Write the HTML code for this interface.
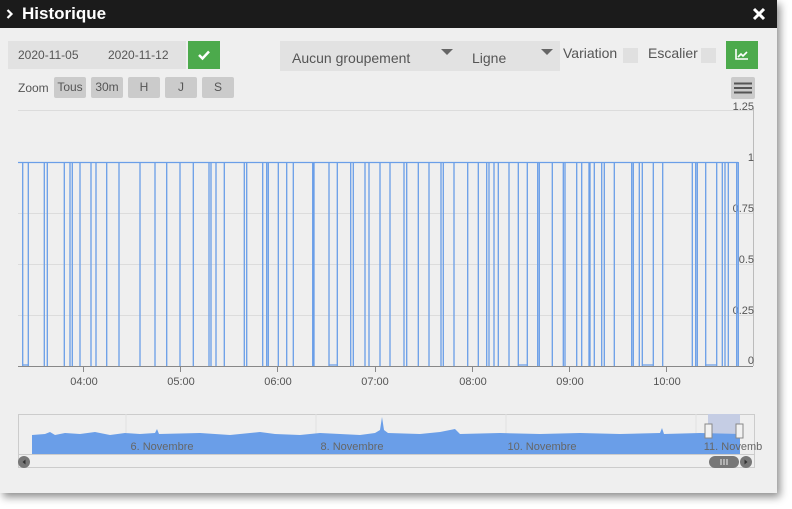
<!DOCTYPE html>
<html><head><meta charset="utf-8"><style>
*{margin:0;padding:0;box-sizing:border-box}
body{width:792px;height:509px;background:#fff;font-family:"Liberation Sans",sans-serif;position:relative;overflow:hidden}
.win{position:absolute;left:0;top:0;width:777px;height:493px;background:#efefef;box-shadow:3px 4px 8px rgba(0,0,0,.45)}
.title{position:absolute;left:0;top:0;width:777px;height:28px;background:#1b1b1b;color:#fff;font-size:17px;font-weight:bold}
.abs{position:absolute}
.btn{position:absolute;background:#cbcbcb;color:#555;font-size:12px;text-align:center;line-height:21px;height:21px;border-radius:2px}
</style></head><body>
<div class="win">
<div class="title"><svg class="abs" style="left:6px;top:9px" width="8" height="10"><path d="M1.5 1L5.5 5L1.5 9" stroke="#fff" stroke-width="2.2" fill="none"/></svg><span class="abs" style="left:22px;top:4px">Historique</span>
<svg class="abs" style="left:752px;top:7px" width="14" height="14"><path d="M2 2L12 12M12 2L2 12" stroke="#fff" stroke-width="3"/></svg></div>
<div class="abs" style="left:8px;top:41px;width:178px;height:28px;background:#e2e2e2"></div>
<span class="abs" style="left:18px;top:48px;font-size:12px;color:#555">2020-11-05</span>
<span class="abs" style="left:108px;top:48px;font-size:12px;color:#555">2020-11-12</span>
<div class="abs" style="left:188px;top:41px;width:32px;height:28px;background:#4caa4c"></div>
<svg class="abs" style="left:197px;top:49px" width="14" height="12"><path d="M2 6L5.5 9.5L12 2.5" stroke="#fff" stroke-width="2.5" fill="none"/></svg>
<div class="abs" style="left:280px;top:41px;width:280px;height:30px;background:#e2e2e2"></div>
<span class="abs" style="left:292px;top:50px;font-size:14px;color:#555">Aucun groupement</span>
<svg class="abs" style="left:441px;top:49px" width="12" height="6"><path d="M0 0H12L6 6Z" fill="#666"/></svg>
<span class="abs" style="left:472px;top:50px;font-size:14px;color:#555">Ligne</span>
<svg class="abs" style="left:541px;top:49px" width="12" height="6"><path d="M0 0H12L6 6Z" fill="#666"/></svg>
<span class="abs" style="left:563px;top:45px;font-size:14px;color:#555">Variation</span>
<div class="abs" style="left:623px;top:48px;width:15px;height:15px;background:#e0e0e0"></div>
<span class="abs" style="left:648px;top:45px;font-size:14px;color:#555">Escalier</span>
<div class="abs" style="left:701px;top:48px;width:15px;height:15px;background:#e0e0e0"></div>
<div class="abs" style="left:726px;top:41px;width:32px;height:28px;background:#4caa4c"></div>
<svg class="abs" style="left:735px;top:49px" width="14" height="11"><path d="M1 0V10H13M3 8L6 5L8 7L12 3" stroke="#fff" stroke-width="1.6" fill="none"/></svg>
<span class="abs" style="left:18px;top:81px;font-size:12px;color:#555">Zoom</span>
<div class="btn" style="left:54px;top:77px;width:32px">Tous</div>
<div class="btn" style="left:91px;top:77px;width:32px">30m</div>
<div class="btn" style="left:128px;top:77px;width:32px">H</div>
<div class="btn" style="left:165px;top:77px;width:32px">J</div>
<div class="btn" style="left:202px;top:77px;width:32px">S</div>
<div class="abs" style="left:731px;top:77px;width:24px;height:22px;background:#cbcbcb;border-radius:2px"></div>
<svg class="abs" style="left:734px;top:82px" width="18" height="12"><path d="M0 1.5H18M0 6H18M0 10.5H18" stroke="#555" stroke-width="2"/></svg>
<svg class="abs" style="left:0;top:0" width="777" height="493" font-family="Liberation Sans" font-size="11" fill="#555">
<g stroke="#dcdcdc" stroke-width="1">
<line x1="18" y1="110.5" x2="753" y2="110.5"/><line x1="18" y1="213.5" x2="753" y2="213.5"/><line x1="18" y1="264.5" x2="753" y2="264.5"/><line x1="18" y1="315.5" x2="753" y2="315.5"/></g>
<line x1="753.5" y1="108" x2="753.5" y2="366" stroke="#bbb"/>
<line x1="18" y1="366.5" x2="753" y2="366.5" stroke="#888"/>
<g stroke="#888"><line x1="83.5" y1="366" x2="83.5" y2="372"/><line x1="180.5" y1="366" x2="180.5" y2="372"/><line x1="277.5" y1="366" x2="277.5" y2="372"/><line x1="375.5" y1="366" x2="375.5" y2="372"/><line x1="472.5" y1="366" x2="472.5" y2="372"/><line x1="569.5" y1="366" x2="569.5" y2="372"/><line x1="666.5" y1="366" x2="666.5" y2="372"/></g>
<g text-anchor="middle"><text x="84" y="385">04:00</text><text x="181" y="385">05:00</text><text x="278" y="385">06:00</text><text x="375" y="385">07:00</text><text x="473" y="385">08:00</text><text x="570" y="385">09:00</text><text x="667" y="385">10:00</text></g>
<g text-anchor="end"><text x="754" y="110">1.25</text><text x="754" y="161">1</text><text x="754" y="212">0.75</text><text x="754" y="263">0.5</text><text x="754" y="314">0.25</text><text x="754" y="364">0</text></g>
<g stroke="#6a9ee8" stroke-width="1.3" fill="none">
<path d="M18 162.5H738"/>
<path d="M22.7 162V366M28.3 162V366M44.3 162V366M47.3 162V366M64.3 162V366M70 162V366M72.3 162V366M80 162V366M91 162V366M96 162V366M106.7 162V366M119 162V366M140 162V366M155 162V366M166.7 162V366M180 162V366M193.3 162V366M209 162V366M211 162V366M216 162V366M224.3 162V366M244.3 162V366M246.7 162V366M262.7 162V366M266.7 162V366M268.3 162V366M278.3 162V366M286.7 162V366M293.3 162V366M312.7 162V366M314 162V366M329 162V366M337.3 162V366M350.7 162V366M353.3 162V366M365 162V366M369 162V366M380 162V366M390 162V366M404 162V366M406.7 162V366M418.3 162V366M429 162V366M441 162V366M443.3 162V366M454 162V366M467.7 162V366M478.3 162V366M486.7 162V366M489 162V366M494 162V366M498.3 162V366M509 162V366M518.3 162V366M527.3 162V366M537.7 162V366M539.3 162V366M552.3 162V366M563.3 162V366M565 162V366M576.7 162V366M581.7 162V366M589 162V366M590 162V366M594.3 162V366M601.7 162V366M604.3 162V366M614.3 162V366M631.7 162V366M633.3 162V366M639.3 162V366M642.3 162V366M653.3 162V366M662.7 162V366M692.3 162V366M695.7 162V366M697.3 162V366M705.7 162V366M716.7 162V366M722.3 162V366M725 162V366M728.3 162V366M736.7 162V366M738.3 162V366"/>
<path d="M22.7 365H28.3M329 365H337.3M518.3 365H527.3M642.3 365H653.3M705.7 365H716.7"/>
</g>
<rect x="18.5" y="414.5" width="736" height="53" fill="none" stroke="#ccc"/>
<line x1="18" y1="454.5" x2="754" y2="454.5" stroke="#ccc"/>
<g stroke="#e0e0e0"><line x1="126" y1="414" x2="126" y2="454"/><line x1="316" y1="414" x2="316" y2="454"/><line x1="506" y1="414" x2="506" y2="454"/><line x1="696" y1="414" x2="696" y2="454"/></g>
<rect x="708" y="414" width="32" height="40" fill="#c5cde4"/>
<path d="M32 454V435L45 434L50 432L55 435L65 433L80 434L95 432L110 435L125 433L140 434L155 433L157 429L159 434L200 433L230 435L260 432L275 434L300 435L320 433L340 434L360 435L375 433L380 430L382 417L384 430L388 433L420 434L440 432L455 429L460 434L500 433L540 434L580 433L620 434L660 433L662 428L664 434L700 433L740 434V454Z" fill="#6a9ee8"/>
<g text-anchor="middle" fill="#666"><text x="162" y="450">6. Novembre</text><text x="352" y="450">8. Novembre</text><text x="542" y="450">10. Novembre</text><text x="733" y="450">11. Novemb</text></g>
<rect x="705" y="424" width="7" height="14" fill="#f2f2f2" stroke="#888"/><rect x="736" y="424" width="7" height="14" fill="#f2f2f2" stroke="#888"/>
<circle cx="24" cy="462" r="6" fill="#777"/><path d="M25.5 459.5L22.5 462L25.5 464.5Z" fill="#333"/>
<rect x="709" y="456" width="30" height="12" rx="6" fill="#777"/>
<path d="M721 459V465M724 459V465M727 459V465" stroke="#eee"/>
<circle cx="746" cy="462" r="6" fill="#777"/><path d="M744.5 459.5L747.5 462L744.5 464.5Z" fill="#333"/>
</svg>
</div>
</body></html>
